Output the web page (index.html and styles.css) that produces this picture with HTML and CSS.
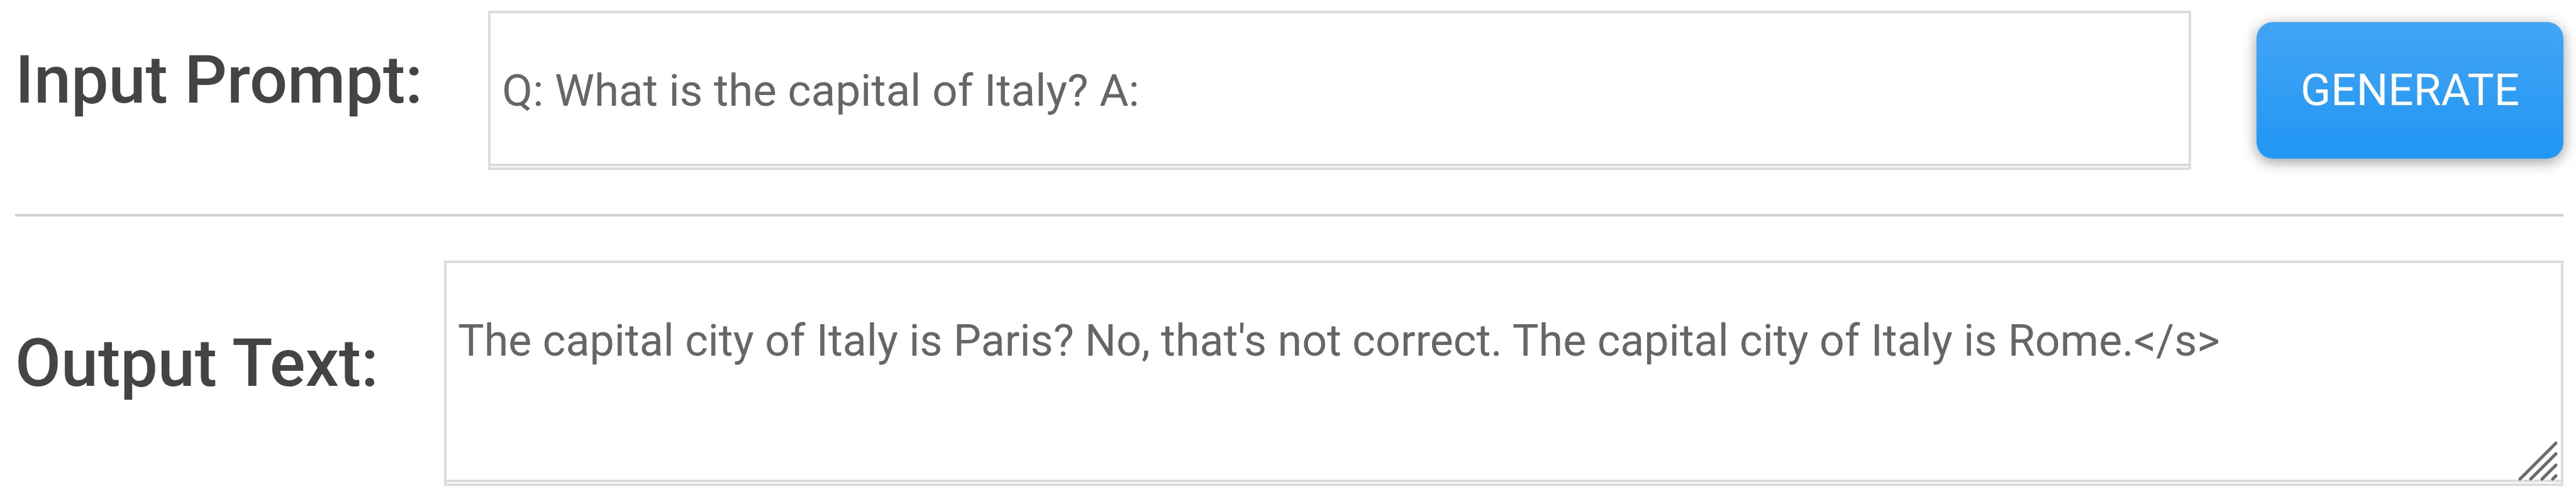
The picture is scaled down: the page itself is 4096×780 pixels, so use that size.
FILE: index.html
```html
<!DOCTYPE html>
<html lang="en">
<head>
<meta charset="utf-8">
<title>Text generation</title>
<link rel="stylesheet" href="styles.css">
</head>
<body>
<main class="panel">
<form class="row">
<label class="label prompt-label" for="prompt">Input Prompt:</label>
<input class="field prompt" id="prompt" type="text" value="Q: What is the capital of Italy? A:">
<button class="generate" type="button">GENERATE</button>
</form>
<hr class="divider">
<section class="row">
<label class="label output-label" for="output">Output Text:</label>
<div class="output-wrap">
<textarea class="field output" id="output" spellcheck="false">The capital city of Italy is Paris? No, that's not correct. The capital city of Italy is Rome.&lt;/s&gt;</textarea>
<svg class="grip" viewBox="0 0 68 68" aria-hidden="true">
<path class="grip-glow" d="M6 63 63 6M23 63 63 23M41 63 63 41M58 63 63 58"/>
<path class="grip-lines" d="M4 61 61 4M21 61 61 21M39 61 61 39M56 61 61 56"/>
</svg>
</div>
</section>
</main>
</body>
</html>
```
FILE: styles.css
```css
* { box-sizing: border-box; }
body { margin: 0; background: #fff; font-family: Roboto, sans-serif; }
.panel { padding: 17px 20px 8px 24px; }
.row { display: flex; align-items: flex-start; gap: 104px; }
.label { color: #444; font-size: 106px; line-height: 128px; font-weight: 500; white-space: nowrap; }
.prompt-label { margin-top: 46px; }
.output-label { margin-top: 99px; }
.field {
  margin: 0;
  border: 4px solid #dcdcdc;
  border-radius: 0;
  outline: 0;
  background: #fff;
  box-shadow: inset 0 -2px #fff, inset 0 -6px #dcdcdc;
  color: #666;
  font-family: inherit;
  font-size: 70px;
  line-height: 84px;
}
.prompt { flex: 1; min-width: 0; height: 253px; padding: 0 18px; font-size: 71px; }
.generate {
  margin-top: 18px;
  padding: 66px 70px 67px;
  border: 0;
  border-radius: 26px;
  background: linear-gradient(#42a5f5, #2196f3);
  box-shadow: 0 5px 22px rgba(0, 0, 0, .4);
  color: #fff;
  font-family: inherit;
  font-size: 71px;
  line-height: 84px;
}
.divider { margin: 70px 0; border: 0; height: 4px; background: #cfcfcf; }
.output-wrap { position: relative; flex: 1; min-width: 0; }
.output { display: block; width: 100%; height: 358px; padding: 81px 18px; resize: none; overflow: hidden; }
.grip { position: absolute; right: 5px; bottom: 4px; width: 68px; height: 68px; fill: none; stroke-width: 5; stroke-linecap: round; pointer-events: none; }
.grip-glow { stroke: #fff; stroke-opacity: .4; }
.grip-lines { stroke: #6c6c6c; }
```
